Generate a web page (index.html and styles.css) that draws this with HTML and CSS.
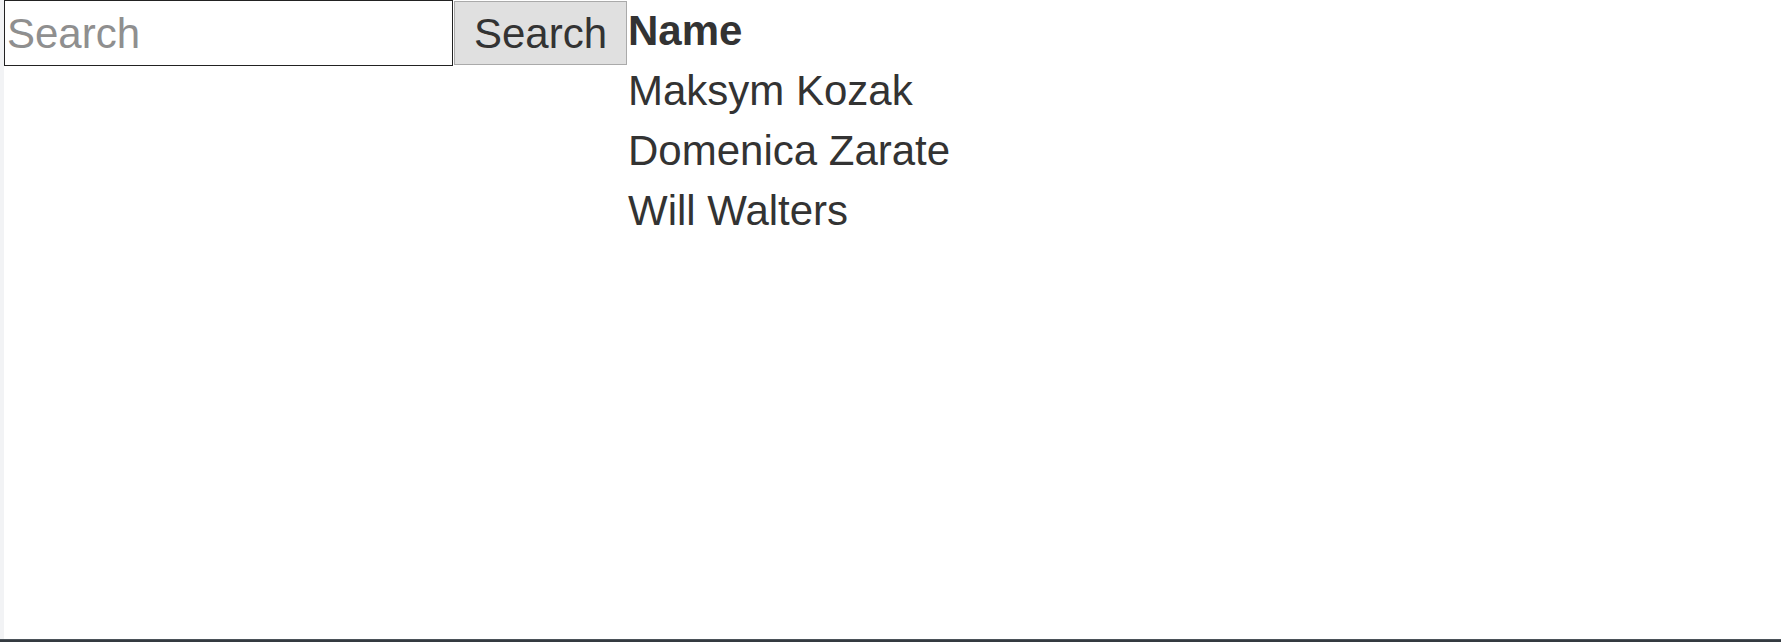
FILE: index.html
```html
<!DOCTYPE html>
<html lang="en">
<head>
<meta charset="utf-8">
<title>Search</title>
<link rel="stylesheet" href="styles.css">
</head>
<body>
<div class="frame">
  <div class="content">
    <form class="search" onsubmit="return false;">
      <input class="search-input" type="text" placeholder="Search">
      <button class="search-btn" type="submit">Search</button>
    </form>
    <table class="people">
      <thead>
        <tr><th>Name</th></tr>
      </thead>
      <tbody>
        <tr><td>Maksym Kozak</td></tr>
        <tr><td>Domenica Zarate</td></tr>
        <tr><td>Will Walters</td></tr>
      </tbody>
    </table>
  </div>
  <div class="bottom-bar"></div>
</div>
</body>
</html>
```
FILE: styles.css
```css
html, body {
  margin: 0;
  padding: 0;
  height: 100%;
  background: #ffffff;
}
.frame {
  display: flex;
  flex-direction: column;
  height: 642px;
}
.content {
  flex: 1;
  display: flex;
  align-items: flex-start;
  border-left: 4px solid #f2f3f5;
  font-family: "Liberation Sans", Arial, sans-serif;
  color: #333333;
}
.search {
  display: flex;
  align-items: flex-start;
  margin: 0;
}
.search-input {
  box-sizing: border-box;
  width: 449px;
  height: 66px;
  margin: 0;
  padding: 1px 2px 0;
  border: 1px solid #222222;
  font-family: "Liberation Sans", Arial, sans-serif;
  font-size: 42px;
  color: #333333;
  background: #ffffff;
  outline: none;
}
.search-input::placeholder {
  color: #8f8f8f;
}
.search-btn {
  box-sizing: border-box;
  width: 173px;
  height: 64px;
  margin: 1px 0 0 1px;
  padding: 1px 0 0;
  border: 1px solid #aaaaaa;
  background: #e0e0e0;
  font-family: "Liberation Sans", Arial, sans-serif;
  font-size: 42px;
  color: #333333;
}
.people {
  border-collapse: collapse;
  margin: 1px 0 0 1px;
  font-size: 42px;
  line-height: 60px;
}
.people th,
.people td {
  padding: 0;
  text-align: left;
  white-space: nowrap;
}
.people th {
  font-weight: bold;
}
.bottom-bar {
  height: 3px;
  background: #343a40;
  border-top: 1px solid #4b5259;
  box-sizing: border-box;
}
```
